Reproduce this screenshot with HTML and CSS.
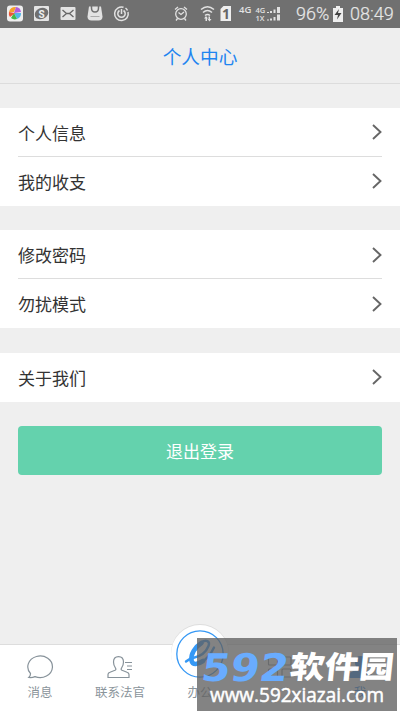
FILE: index.html
```html
<!DOCTYPE html>
<html lang="zh-CN">
<head>
<meta charset="utf-8">
<title>个人中心</title>
<link rel="stylesheet" href="styles.css">
</head>
<body>
<div class="phone">
  <div class="status">
    <svg class="status-icons" width="290" height="27" viewBox="0 0 290 27">
      <rect x="7" y="5.500" width="16" height="16" rx="3" fill="#eee"/>
      <path d="M9 12a6 6 0 0 1 7-5l-2 5z" fill="#f6a12b"/>
      <path d="M16 7a6 6 0 0 1 5 5l-7 1z" fill="#b45bdc"/>
      <path d="M21 13a6 6 0 0 1-4 6l-3-6z" fill="#54b6e8"/>
      <path d="M17 19a6 6 0 0 1-6-1l3-5z" fill="#43b649"/>
      <path d="M10 17a6 6 0 0 1-1-5l6 1z" fill="#ed5438"/>
      <rect x="34" y="6" width="15" height="15" rx="1" fill="#e4e4e4"/>
      <ellipse cx="41.500" cy="13.500" rx="7" ry="5.500" fill="#707070" transform="rotate(-25 41.500 13.500)"/>
      <text x="38.500" y="17.500" class="s-letter">S</text>
      <rect x="60.500" y="7" width="15" height="13" rx="1" fill="#e4e4e4"/>
      <path d="M62.500 10l4 3.500-4 3.500M73.500 10l-4 3.500 4 3.500M66.500 13.500h3" fill="none" stroke="#666" stroke-width="1.300"/>
      <path d="M89 6.500h12l1.500 10q0 4-4 4h-7q-4 0-4-4z" fill="#e2e2e2"/>
      <path d="M91.500 6v2q0 4 3.500 4t3.500-4V6" fill="none" stroke="#707070" stroke-width="1.500"/>
      <path d="M90.500 16.500h9" stroke="#aaa"/>
      <g fill="none" stroke="#e2e2e2" stroke-width="1.500">
        <path d="M123.500 7.300A6.800 6.800 0 1 0 128 12M127.500 10.500a7 7 0 0 0-2-2.500M119.500 10.500a3.700 3.700 0 1 0 4 0M121.500 9v5"/>
        <g stroke-width="1.300">
          <circle cx="181" cy="14" r="5.300"/>
          <path d="M178.500 12.500l2.500 2 3-2.500M175 9.500l3-2.500M184 7l3 2.500M177.500 18.500l-1.500 2M184.500 18.500l1.500 2"/>
        </g>
        <path d="M201 9.500q6.500-5.500 13 0M203 12.500q4.500-4 9 0M205 15.500q2.500-2 5 0"/>
      </g>
      <path d="M206 16l2 2.500h-1V21h-1.500v-2.500h-1.500zM209.500 21.500l-2-2.500h1v-2.500h1.500V19h1.500z" fill="#e2e2e2"/>
      <path d="M220.500 9l3-3h7.500v15h-10.500z" fill="#eee"/>
      <text x="222" y="18.500" class="sim">1</text>
      <text x="239" y="13" class="net">4G</text>
      <text x="255.500" y="12.500" class="net small">4G</text>
      <text x="255.500" y="20.500" class="net small">1X</text>
      <path d="M267 13v-1h2v1zM270 13v-2h2v2zM273.500 13V9.500h2V13zM277 13V7h3v6zM267 20.500v-1h2v1zM270 20.500v-2h2v2zM273.500 20.500V17h2v3.500zM277 20.500V14.500h3v6z" fill="#e2e2e2"/>
    </svg>
    <span class="percent">96%</span>
    <svg class="battery" width="10" height="16" viewBox="0 0 10 16"><path d="M0 2h3V0h4v2h3v14H0z" fill="#eee"/><path d="M6 3L1.500 9H5l-1 4.500L8.500 7H5z" fill="#444"/></svg>
    <span class="clock">08:49</span>
  </div>
  <header class="title">个人中心</header>
  <main class="content">
    <section class="group">
      <div class="row"><span>个人信息</span><svg class="arrow" viewBox="0 0 10 16"><path d="M1 1l7.500 7L1 15"/></svg></div>
      <div class="row"><span>我的收支</span><svg class="arrow" viewBox="0 0 10 16"><path d="M1 1l7.500 7L1 15"/></svg></div>
    </section>
    <section class="group">
      <div class="row"><span>修改密码</span><svg class="arrow" viewBox="0 0 10 16"><path d="M1 1l7.500 7L1 15"/></svg></div>
      <div class="row"><span>勿扰模式</span><svg class="arrow" viewBox="0 0 10 16"><path d="M1 1l7.500 7L1 15"/></svg></div>
    </section>
    <section class="group">
      <div class="row"><span>关于我们</span><svg class="arrow" viewBox="0 0 10 16"><path d="M1 1l7.500 7L1 15"/></svg></div>
    </section>
    <button class="logout">退出登录</button>
  </main>
  <nav class="tabs">
    <div class="tab"><svg width="28" height="24" viewBox="0 0 28 24"><path d="M4.500 18.500A12.300 10.800 0 1 1 9 21.600Q6 23 2.800 22.500Q4.600 21 4.500 18.500z"/></svg><span>消息</span></div>
    <div class="tab"><svg width="28" height="24" viewBox="0 0 28 24"><path d="M2 22.500v-3q0-1.500 2-2.200l5-2q1.500-.8.500-2.200-2-2.500-2-6 0-5.500 5-5.500t5 5.500q0 3.500-2 6-1 1.400.5 2.200l5 2q2 .7 2 2.200v3zM19 7.500h7M21 11h5M21 14.500h5"/></svg><span>联系法官</span></div>
    <div class="tab center"><div class="bubble"><svg width="48" height="48" viewBox="0 0 48 48"><circle cx="24" cy="24" r="23.200"/><path class="swirl" d="M25.500 13C19 17 14.500 24 15.500 30.500C16.500 35.500 22 34.500 27 31"/><path class="tail" d="M25 12.500C30 9 34.500 11 32.500 16C30 22.500 24 26.500 17 28Q13 29 10 31.500M25 32.500C31 29 35 24 38 17.500"/></svg></div><span>办公</span></div>
    <div class="tab"><svg width="28" height="24" viewBox="0 0 28 24"><path d="M3.500 2h7q1 0 1 1v6q0 1-1 1h-7q-1 0-1-1V3q0-1 1-1zM17 2h7q1 0 1 1v6q0 1-1 1h-7q-1 0-1-1V3q0-1 1-1zM3.500 14h7q1 0 1 1v6q0 1-1 1h-7q-1 0-1-1v-6q0-1 1-1zM17 14h7q1 0 1 1v6q0 1-1 1h-7q-1 0-1-1v-6q0-1 1-1z"/></svg></div>
    <div class="tab active"><svg width="28" height="24" viewBox="0 0 28 24"><path d="M4 22.500v-3q0-1.500 2-2.200l5-2q1.500-.8.500-2.200-2-2.500-2-6 0-5.500 5-5.500t5 5.500q0 3.500-2 6-1 1.400.5 2.200l5 2q2 .7 2 2.200v3z"/></svg><span>我</span></div>
  </nav>
  <div class="watermark">
    <svg width="200" height="73" viewBox="0 0 200 73">
      <text class="wm-num" transform="translate(3 43) skewX(-8)" textLength="87" lengthAdjust="spacingAndGlyphs">592</text>
      <text class="wm-name" transform="translate(92 39.500) skewX(-6) scale(1 .9)" textLength="104" lengthAdjust="spacingAndGlyphs">软件园</text>
      <text class="wm-url" x="13" y="63.500" textLength="174" lengthAdjust="spacingAndGlyphs">www.592xiazai.com</text>
    </svg>
  </div>
</div>
</body>
</html>
```
FILE: styles.css
```css
* { box-sizing: border-box; }
body { margin: 0; font-family: "Noto Sans CJK SC", sans-serif; background: #efefef; }
.phone { position: relative; display: flex; flex-direction: column; height: 711px; overflow: hidden; }
.status { display: flex; flex: none; align-items: center; height: 27.5px; background: #707070; color: #e6e6e6; font-family: Roboto, sans-serif; font-size: 18px; }
.status-icons { flex: none; }
.percent { width: 43px; margin-left: 6px; }
.percent, .clock { font-weight: 300; -webkit-text-stroke: .2px #e6e6e6; }
.battery { margin-right: 7px; margin-left: -6px; flex: none; }
.s-letter { font: bold 10px Roboto, sans-serif; fill: #eee; }
.sim { font: bold 14px "Noto Sans", sans-serif; fill: #666; }
.net { font: 600 9.5px "Open Sans", sans-serif; fill: #e2e2e2; }
.small { font-size: 7.5px; }
.title { flex: none; height: 56px; border-bottom: 1px solid #dcdcdc; color: #1f85f0; background: #eee; font-size: 18.7px; line-height: 56px; text-align: center; }
.content { flex: 1; padding-top: 24px; }
.group { margin-bottom: 24.5px; padding: 0 18px; background: #fff; }
.row { position: relative; display: flex; align-items: center; justify-content: space-between; height: 49px; color: #333; font-size: 17px; }
.row + .row { box-shadow: 0 -1px 0 #ddd; }
.arrow { width: 10px; height: 16px; fill: none; stroke: #666; stroke-width: 1.9; }
.logout { display: block; width: 364px; height: 49px; margin: 0 18px; padding: 0 0 1px; border: 0; border-radius: 4px; background: #64d2ad; color: #fff; font: 17px "Noto Sans CJK SC", sans-serif; }
.tabs { display: flex; flex: none; height: 67px; border-top: 1px solid #ddd; background: #fff; }
.tab { display: flex; flex: 1; flex-direction: column; align-items: center; padding-top: 10px; color: #8a949b; font-size: 12.5px; line-height: 18px; }
.tab svg { fill: none; stroke: #87929a; stroke-width: 1.2; }
.tab span { margin-top: 4px; }
.center { padding-top: 0; }
.bubble { display: flex; align-items: center; justify-content: center; width: 58px; height: 58px; margin-top: -20px; border-radius: 50%; background: #fff; box-shadow: 0 -1px 0 #ddd; }
.bubble svg { flex: none; stroke: #3598f5; stroke-width: 1.3; }
.bubble .swirl { stroke-width: 4.6; stroke-linecap: round; }
.bubble .tail { stroke-width: 2.4; stroke-linecap: round; }
.tab.center span { margin-top: 0; }
.active { color: #2988ea; }
.active svg { fill: #2988ea; stroke: #2988ea; }
.watermark { position: absolute; left: 197px; top: 638px; width: 200px; height: 73px; background: rgba(96, 96, 96, .78); }
.watermark svg { display: block; }
.wm-num { font: bold 38px "DejaVu Sans", sans-serif; fill: #69acff; }
.wm-name { font: 900 34px "Noto Sans CJK SC", sans-serif; fill: #fff; }
.wm-url { font: 20px "Open Sans", sans-serif; fill: #fff; stroke: #fff; stroke-width: .5; }
```
